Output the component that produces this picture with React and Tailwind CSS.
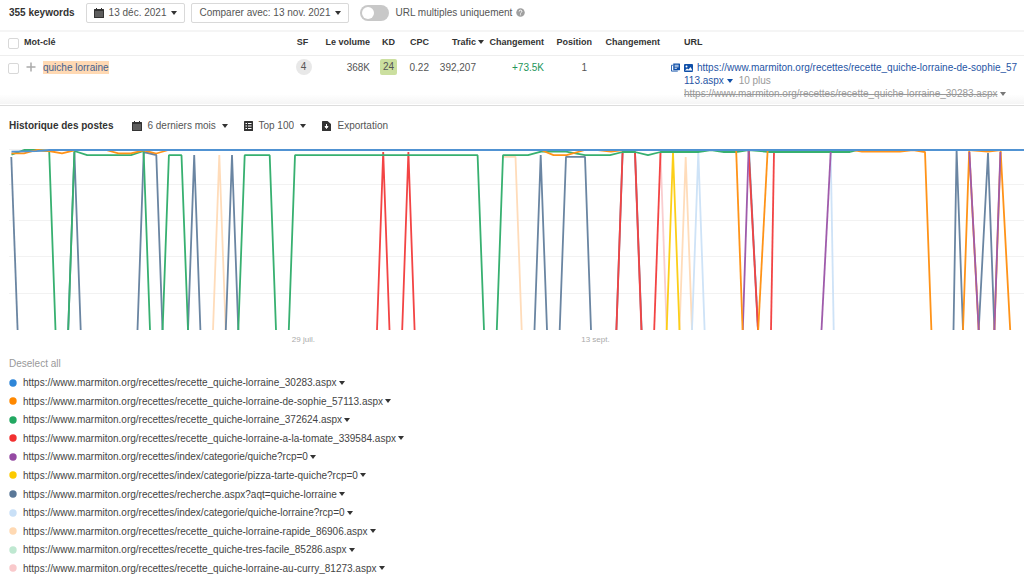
import React from "react";

const urls = [
  ["#2f86d8", "https://www.marmiton.org/recettes/recette_quiche-lorraine_30283.aspx"],
  ["#ff8800", "https://www.marmiton.org/recettes/recette_quiche-lorraine-de-sophie_57113.aspx"],
  ["#22a861", "https://www.marmiton.org/recettes/recette_quiche-lorraine_372624.aspx"],
  ["#f23030", "https://www.marmiton.org/recettes/recette_quiche-lorraine-a-la-tomate_339584.aspx"],
  ["#954aa3", "https://www.marmiton.org/recettes/index/categorie/quiche?rcp=0"],
  ["#fcca00", "https://www.marmiton.org/recettes/index/categorie/pizza-tarte-quiche?rcp=0"],
  ["#5a7898", "https://www.marmiton.org/recettes/recherche.aspx?aqt=quiche-lorraine"],
  ["#c9e0f7", "https://www.marmiton.org/recettes/index/categorie/quiche-lorraine?rcp=0"],
  ["#ffd9b3", "https://www.marmiton.org/recettes/recette_quiche-lorraine-rapide_86906.aspx"],
  ["#bfe8d1", "https://www.marmiton.org/recettes/recette_quiche-tres-facile_85286.aspx"],
  ["#f9c9cb", "https://www.marmiton.org/recettes/recette_quiche-lorraine-au-curry_81273.aspx"],
];

// Drawn in order, so the leading position series ends up on top.
const series = [
  { color: "#f9c9cb", lines: ["660.5,152 666.7,330", "634.8,152 641.3,330"] },
  { color: "#ffd9b3", lines: ["213,330 219.3,155 225.7,330", "503,156.8 515.5,156.8 521.7,330", "679.5,330 685.7,157 692,330"] },
  { color: "#c9e0f7", lines: ["692,330 698.3,152 704.6,330", "830.7,152 833.7,330"] },
  { color: "#5a7898", lines: [
    "11.3,157 17.6,330", "68.2,330 74.4,152 80.7,330", "137.5,330 143.7,152 156.3,155 162.5,330",
    "188,330 194.2,155 200.4,330", "225.8,330 232,155 238.3,330", "534.5,330 540.7,155 547,330",
    "559.7,330 566,156.8 585,156.8 591,330", "616.4,330 622.6,152 635,152 641.6,330", "749,151 758,330",
    "953.5,330 956.6,150 963,330", "978.7,330 988,153 994.4,330", "770,152 850,152",
  ] },
  { color: "#fcca00", lines: ["666.7,330 673,152 679.5,330"] },
  { color: "#f23030", lines: [
    "377,330 383.2,152 389.5,330", "402.2,330 408.4,152 414.6,330", "616.4,330 622.6,152 635,152 641.5,330",
    "654.2,330 660.5,152", "748.6,150 758,330", "771,330 774,152",
  ] },
  { color: "#22a861", lines: [
    "11.5,154.6 24,150 36.6,150 49.2,151 55.5,330", "68.2,330 74.4,151 87.2,155.2 131,155.2 143.6,151 150,330",
    "162.6,330 168.9,155.2 181.5,155.2 188,330", "238.3,330 244.7,155.2 269.7,155.2 276,330",
    "288.8,330 295,155.2 477.6,155.2 484,330", "496.8,330 503,155.2 528,155.2 541,151.6 566,151.6 585,155.2 610,155.2 622.6,152 635,152 648,155.2 660.4,152 698,152 711,150 724,152 736,152 748.5,150 770,152 850,152 858,150",
  ] },
  { color: "#954aa3", lines: ["742.8,330 748.6,150", "821.5,330 830.7,152"] },
  { color: "#ff8800", lines: [
    "11.5,153.3 24,153.3 36.6,150 49,151 62,153.3 74.4,150.3", "106,150 118.5,153.3 131,153.3 143.6,150.3 156.2,153.5 168.5,150",
    "541,150 553.5,155.2 566.5,155.2 585,150 598,150 611,151.5 623,150", "736.2,151 742.6,330", "758.2,330 767.6,151",
    "853,150 862,151.7 900,151.7 913,150 925,152 931.4,330", "963,330 969.2,150 978.7,330", "969.2,150 988,151.5 1000.6,150", "994.4,330 1000.6,150 1010.2,330",
  ] },
  { color: "#954aa3", lines: ["969.4,152 978.7,330", "994.4,330 1000.4,152"] },
  { color: "#3f88cf", lines: ["11.5,151.6 36.6,151.2 49.2,150 1024,150"] },
];

function Caret({ className = "text-[#333]" }) {
  return (
    <svg viewBox="0 0 6 4" className={`inline-block h-1 w-1.5 shrink-0 ${className}`} aria-hidden="true">
      <path d="M0 0h6L3 4z" fill="currentColor" />
    </svg>
  );
}

function Calendar() {
  return (
    <svg viewBox="0 0 20 20" className="size-2.5 shrink-0" aria-hidden="true">
      <path d="M1 2h3V0h2v2h8V0h2v2h3q1 0 1 1v16q0 1-1 1H1q-1 0-1-1V3q0-1 1-1z" fill="#333" />
      <path d="M3 8h14M3 12h14M3 16h14" stroke="#ddd" strokeWidth="2" strokeDasharray="2 2" />
    </svg>
  );
}

function Sheet() {
  return (
    <svg viewBox="0 0 18 20" className="h-2.5 w-[9px] shrink-0" aria-hidden="true">
      <path d="M1 0h16q1 0 1 1v18q0 1-1 1H1q-1 0-1-1V1q0-1 1-1z" fill="#333" />
      <path d="M3 5h3M8 5h7M3 10h3M8 10h7M3 15h3M8 15h7" stroke="#fff" strokeWidth="2.4" />
    </svg>
  );
}

function Download() {
  return (
    <svg viewBox="0 0 18 20" className="h-2.5 w-[9px] shrink-0" aria-hidden="true">
      <path d="M1 0h10l7 6v13q0 1-1 1H1q-1 0-1-1V1q0-1 1-1z" fill="#333" />
      <path d="M9 6v5M6 11h6l-3 4z" fill="#fff" stroke="#fff" strokeWidth="2" />
    </svg>
  );
}

function NewsIcon() {
  return (
    <svg viewBox="0 0 20 18" className="mr-1 inline-block h-[9px] w-[9px] align-[-1px]" aria-hidden="true">
      <path d="M5 0h14q1 0 1 1v13q0 1-1 1H5z" fill="#0f4fa8" />
      <path d="M4 4H1v13h14" fill="none" stroke="#0f4fa8" strokeWidth="2" />
      <path d="M8 4h9M8 7.5h9M8 11h5" stroke="#fff" strokeWidth="1.8" />
    </svg>
  );
}

function ImageIcon() {
  return (
    <svg viewBox="0 0 18 16" className="mr-1 inline-block h-2 w-[9px] align-[-1px]" aria-hidden="true">
      <rect width="18" height="16" rx="2" fill="#0f4fa8" />
      <circle cx="5" cy="5" r="2" fill="#fff" />
      <path d="M2 13l4-4 3 2 4-5 4 7z" fill="#fff" />
    </svg>
  );
}

const box = "block size-[11px] appearance-none rounded-[2px] border border-[#d8d8d8] bg-white checked:bg-[#2f86d8]";

function Picker({ label, icon, value }) {
  return (
    <label className="flex items-center">
      {icon}
      <select aria-label={label} className="ml-[5px] mr-1.5 appearance-none bg-transparent">
        <option>{value}</option>
      </select>
      <Caret />
    </label>
  );
}

function Toolbar() {
  const button = "flex h-5 items-center rounded-[2px] border border-[#d9d9d9]";
  return (
    <header className="flex h-8 items-center border-b-2 border-[#f5f5f5] pb-[5px] pl-[9px]">
      <h1 className="mr-[11px] font-bold text-[#333]">355 keywords</h1>
      <button type="button" className={`${button} mr-1.5 px-[7px]`}>
        <Calendar />
        <span className="mx-[5px]">13 déc. 2021</span>
        <Caret />
      </button>
      <button type="button" className={`${button} mr-[11px] px-[7px]`}>
        <span className="mr-[5px]">Comparer avec: 13 nov. 2021</span>
        <Caret />
      </button>
      <label className="flex items-center">
        <input
          type="checkbox"
          role="switch"
          className="mr-1.5 flex h-4 w-[29px] appearance-none items-center rounded-full bg-[#c8c8c8] px-0.5 before:size-3 before:rounded-full before:bg-white checked:justify-end checked:bg-[#2f86d8]"
        />
        URL multiples uniquement
      </label>
      <button type="button" aria-label="Aide" className="ml-1">
        <svg viewBox="0 0 18 18" className="size-[9px]" aria-hidden="true">
          <circle cx="9" cy="9" r="8.5" fill="#a0a0a0" />
          <path d="M6.3 7q0-2.7 2.7-2.7T11.7 7q0 1.3-1.5 2.1T9 11" fill="none" stroke="#fff" strokeWidth="2" />
          <circle cx="9" cy="13.5" r="1.2" fill="#fff" />
        </svg>
      </button>
    </header>
  );
}

function Keywords() {
  return (
    <table className="w-full table-fixed text-right">
      <colgroup>
        <col className="w-6" />
        <col className="w-[258px]" />
        <col className="w-[43px]" />
        <col className="w-[45px]" />
        <col className="w-[37px]" />
        <col className="w-[22px]" />
        <col className="w-[55px]" />
        <col className="w-[60px]" />
        <col className="w-[59px]" />
        <col className="w-[57px]" />
        <col />
      </colgroup>
      <thead>
        <tr className="h-[23px] whitespace-nowrap border-b border-[#eee] text-[9px] text-[#333]">
          <th className="pl-2 pt-px">
            <input type="checkbox" aria-label="Tout sélectionner" className={box} />
          </th>
          <th className="pb-0.5 text-left">Mot-clé</th>
          <th className="pb-0.5 pr-0.5 text-center">SF</th>
          <th className="pb-0.5">Le volume</th>
          <th className="pb-0.5 text-center">KD</th>
          <th className="pb-0.5">CPC</th>
          <th className="pb-0.5">
            <button type="button" className="inline-flex items-center gap-0.5 font-bold">
              Trafic
              <Caret />
            </button>
          </th>
          <th className="pb-0.5">Changement</th>
          <th className="pb-0.5 pr-[11px]">Position</th>
          <th className="pb-0.5">Changement</th>
          <th className="pb-0.5 pl-6 text-left">URL</th>
        </tr>
      </thead>
      <tbody>
        <tr className="h-[50px] border-b border-[#ddd] bg-linear-to-b from-white from-80% to-[#f5f5f5] align-top leading-[13px]">
          <td className="pl-2 pt-[7px]">
            <input type="checkbox" aria-label="Sélectionner quiche lorraine" className={box} />
          </td>
          <td className="pt-[5px] text-left">
            <div className="flex items-center gap-[7px] pl-0.5">
              <button type="button" aria-label="Ajouter à une liste">
                <svg viewBox="0 0 10 10" className="size-2.5" aria-hidden="true">
                  <path d="M5 .5v9M.5 5h9" stroke="#aaa" strokeWidth="1.5" />
                </svg>
              </button>
              <a href="#chart" className="bg-[#ffd9b3] text-[#46618f]">quiche lorraine</a>
            </div>
          </td>
          <td className="pt-[3px] text-center">
            <span className="inline-block size-4 rounded-full bg-[#e8e8e8] leading-4">4</span>
          </td>
          <td className="pt-[5px]">368K</td>
          <td className="pt-[3px] text-center">
            <span className="inline-block h-4 rounded-[2px] bg-[#cbdf9f] px-[3px] leading-4">24</span>
          </td>
          <td className="pt-[5px]">0.22</td>
          <td className="pr-2 pt-[5px]">392,207</td>
          <td className="pt-[5px] text-[#22955a]">+73.5K</td>
          <td className="pr-4 pt-[5px]">1</td>
          <td />
          <td className="pl-6 pr-1 pt-[5px] text-left">
            <div className="-indent-[13px] break-all text-[#1f55a5]">
              <NewsIcon />
              <ImageIcon />
              <a href="https://www.marmiton.org/recettes/recette_quiche-lorraine-de-sophie_57113.aspx">
                https://www.marmiton.org/recettes/recette_quiche-lorraine-de-sophie_57113.aspx
              </a>{" "}
              <Caret className="align-[1px] text-[#0f4fa8]" />
              <button type="button" className="ml-1.5 indent-0 text-[#999]">10 plus</button>
            </div>
            <div className="whitespace-nowrap text-[#999]">
              <s>https://www.marmiton.org/recettes/recette_quiche-lorraine_30283.aspx</s>{" "}
              <Caret className="align-[1px] text-[#777]" />
            </div>
          </td>
        </tr>
      </tbody>
    </table>
  );
}

function History() {
  return (
    <section id="chart">
      <div className="flex h-10 items-center pl-[9px]">
        <h2 className="mr-[19px] font-bold text-[#333]">Historique des postes</h2>
        <div className="flex items-center gap-4">
          <Picker label="Période" icon={<Calendar />} value="6 derniers mois" />
          <Picker label="Positions" icon={<Sheet />} value="Top 100" />
          <button type="button" className="flex items-center gap-1.5">
            <Download />
            Exportation
          </button>
        </div>
      </div>
      <svg viewBox="0 146 1024 184" preserveAspectRatio="none" className="block h-[184px] w-full" role="img" aria-label="Historique des postes">
        <path d="M9 149.5H1024M9 184.5H1024M9 220.5H1024M9 256.5H1024M9 293.5H1024" stroke="#f2f2f2" />
        <g fill="none" strokeWidth="1.8" strokeLinejoin="bevel" opacity="0.9">
          {series.map((s) => s.lines.map((points) => <polyline key={s.color + points} points={points} stroke={s.color} />))}
        </g>
      </svg>
      <div className="flex h-5 items-center text-[8px] text-[#aaa]">
        <span className="ml-[28.5%]">29 juil.</span>
        <span className="ml-[26%]">13 sept.</span>
      </div>
    </section>
  );
}

function Legend() {
  return (
    <section className="pl-[9px] pt-1.5">
      <button type="button" className="mb-0.5 block h-4 text-[#999]">Deselect all</button>
      <ul className="grid h-[204px] grid-rows-11 text-[#444]">
        {urls.map(([color, url]) => (
          <li key={url} className="flex items-center">
            <svg viewBox="0 0 8 8" className="mr-1.5 size-2" aria-hidden="true">
              <circle cx="4" cy="4" r="3.7" fill={color} />
            </svg>
            <button type="button">{url}</button>
            <button type="button" aria-label={`Options pour ${url}`} className="ml-0.5 flex">
              <Caret />
            </button>
          </li>
        ))}
      </ul>
    </section>
  );
}

export default function App() {
  return (
    <main className="bg-white font-['Liberation_Sans',Arial,sans-serif] text-[10px] leading-[13px] text-[#555]">
      <Toolbar />
      <Keywords />
      <History />
      <Legend />
    </main>
  );
}
